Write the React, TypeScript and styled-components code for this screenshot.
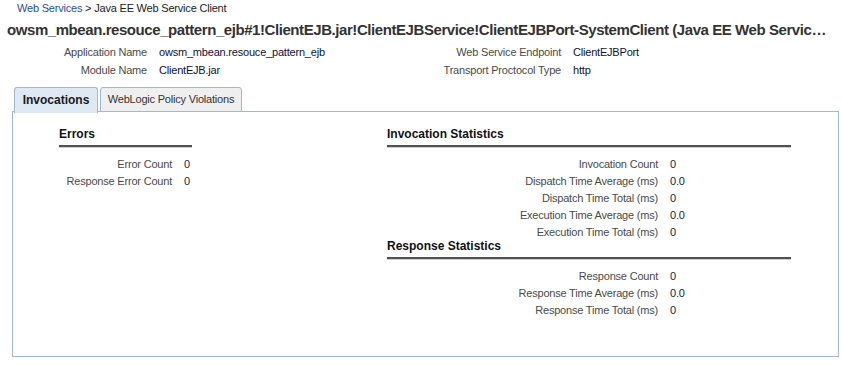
import React from "react";
import styled, { createGlobalStyle } from "styled-components";

const Global = createGlobalStyle`
  html, body { margin: 0; padding: 0; background: #ffffff; }
  body { font-family: Tahoma, "Liberation Sans", Arial, sans-serif; font-size: 11px; letter-spacing: -0.2px; color: #333333; }
`;

const Page = styled.div`
  width: 841px;
  height: 365px;
  overflow: hidden;
  background: #fff;
`;

const Breadcrumb = styled.div`
  padding: 1px 0 0 17px;
  height: 14px;
  line-height: 14px;
  font-size: 11px;
  color: #222;
`;

const Crumb = styled.a`
  color: #2b4f9e;
  text-decoration: none;
`;

const Title = styled.h1`
  margin: 0;
  padding: 5px 0 0 7px;
  width: 820px;
  height: 20px;
  line-height: 20px;
  font-size: 15px;
  font-weight: bold;
  color: #333;
  white-space: nowrap;
  overflow: hidden;
  text-overflow: ellipsis;
  letter-spacing: -0.43px;
`;

const InfoGrid = styled.div`
  display: grid;
  grid-template-columns: 147px 208px 182px 1fr;
  column-gap: 12px;
  grid-auto-rows: 18px;
  margin-top: 3px;
  align-items: center;
`;

const InfoLabel = styled.div`
  text-align: right;
  color: #4a4a4a;
  white-space: nowrap;
`;

const InfoValue = styled.div`
  color: #111133;
  white-space: nowrap;
`;

const TabBar = styled.div`
  display: flex;
  gap: 2px;
  margin: 8px 0 0 14px;
  height: 25px;
  position: relative;
  z-index: 1;
`;

const Tab = styled.div<{ $active?: boolean }>`
  box-sizing: border-box;
  width: ${(p) => (p.$active ? 84 : 142)}px;
  height: ${(p) => (p.$active ? 26 : 25)}px;
  border: 1px solid #9fb9d2;
  border-bottom: ${(p) => (p.$active ? "none" : "1px solid #9fb9d2")};
  border-radius: 3px 3px 0 0;
  background: ${(p) => (p.$active ? "#dfe9f3" : "#efefef")};
  color: ${(p) => (p.$active ? "#1a1a1a" : "#333")};
  font-weight: ${(p) => (p.$active ? "bold" : "normal")};
  font-size: ${(p) => (p.$active ? 12 : 11)}px;
  letter-spacing: ${(p) => (p.$active ? "0" : "-0.2px")};
  display: flex;
  align-items: center;
  justify-content: center;
  padding-bottom: ${(p) => (p.$active ? 2 : 1)}px;
`;

const Panel = styled.div`
  box-sizing: border-box;
  margin-left: 12px;
  width: 827px;
  height: 246px;
  border: 1px solid #9fb9d2;
  margin-top: -1px;
  display: flex;
  padding: 16px 0 0 46px;
`;

const Column = styled.div<{ $width: number; $left?: number }>`
  width: ${(p) => p.$width}px;
  margin-left: ${(p) => p.$left ?? 0}px;
  display: flex;
  flex-direction: column;
`;

const SectionHeader = styled.div`
  font-weight: bold;
  font-size: 12px;
  letter-spacing: 0;
  color: #111;
  height: 13px;
  line-height: 13px;
  padding-bottom: 4px;
  border-bottom: 2px solid #505050;
  box-shadow: 0 1px 0 #d0d0d0;
  margin-bottom: 8px;
`;

const Rows = styled.div<{ $label: number }>`
  display: grid;
  grid-template-columns: ${(p) => p.$label}px 1fr;
  column-gap: 12px;
  grid-auto-rows: 17px;
  align-items: center;
`;

const RowLabel = styled.div`
  text-align: right;
  color: #4a4a4a;
  white-space: nowrap;
`;

const RowValue = styled.div`
  color: #1c1c40;
  white-space: nowrap;
`;

type Stat = [string, string];

const Section = ({ title, rows, label }: { title: string; rows: Stat[]; label: number }) => (
  <>
    <SectionHeader>{title}</SectionHeader>
    <Rows $label={label}>
      {rows.map(([l, v]) => (
        <React.Fragment key={l}>
          <RowLabel>{l}</RowLabel>
          <RowValue>{v}</RowValue>
        </React.Fragment>
      ))}
    </Rows>
  </>
);

export default function App() {
  return (
    <Page>
      <Global />
      <Breadcrumb>
        <Crumb href="#">Web Services</Crumb> &gt; Java EE Web Service Client
      </Breadcrumb>
      <Title>
        owsm_mbean.resouce_pattern_ejb#1!ClientEJB.jar!ClientEJBService!ClientEJBPort-SystemClient (Java EE Web Service Client)
      </Title>
      <InfoGrid>
        <InfoLabel>Application Name</InfoLabel>
        <InfoValue>owsm_mbean.resouce_pattern_ejb</InfoValue>
        <InfoLabel>Web Service Endpoint</InfoLabel>
        <InfoValue>ClientEJBPort</InfoValue>
        <InfoLabel>Module Name</InfoLabel>
        <InfoValue>ClientEJB.jar</InfoValue>
        <InfoLabel>Transport Proctocol Type</InfoLabel>
        <InfoValue>http</InfoValue>
      </InfoGrid>
      <TabBar>
        <Tab $active>Invocations</Tab>
        <Tab>WebLogic Policy Violations</Tab>
      </TabBar>
      <Panel>
        <Column $width={133}>
          <Section
            title="Errors"
            label={113}
            rows={[
              ["Error Count", "0"],
              ["Response Error Count", "0"],
            ]}
          />
        </Column>
        <Column $width={404} $left={195}>
          <Section
            title="Invocation Statistics"
            label={271}
            rows={[
              ["Invocation Count", "0"],
              ["Dispatch Time Average (ms)", "0.0"],
              ["Dispatch Time Total (ms)", "0"],
              ["Execution Time Average (ms)", "0.0"],
              ["Execution Time Total (ms)", "0"],
            ]}
          />
          <Section
            title="Response Statistics"
            label={271}
            rows={[
              ["Response Count", "0"],
              ["Response Time Average (ms)", "0.0"],
              ["Response Time Total (ms)", "0"],
            ]}
          />
        </Column>
      </Panel>
    </Page>
  );
}
